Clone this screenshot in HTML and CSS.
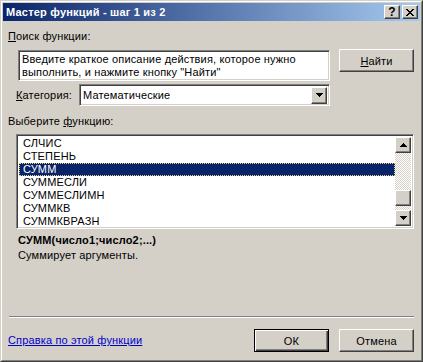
FILE: index.html
```html
<!doctype html>
<html lang="ru">
  <head>
    <meta charset="UTF-8" />
    <title>Мастер функций - шаг 1 из 2</title>
    <link rel="stylesheet" href="styles.css">
  </head>
  <body>
    <div class="window">
      <div class="frame">
        <!-- заголовок окна -->
        <div class="titlebar">
          <span class="title">Мастер функций - шаг 1 из 2</span>
          <div class="title-btns">
            <button class="tbtn help">?</button>
            <button class="tbtn close">
              <svg width="8" height="7" viewBox="0 0 8 7" shape-rendering="crispEdges">
                <path d="M0 0h2v1H0z M6 0h2v1H6z M1 1h2v1H1z M5 1h2v1H5z M2 2h4v1H2z M3 3h2v1H3z M2 4h4v1H2z M1 5h2v1H1z M5 5h2v1H5z M0 6h2v1H0z M6 6h2v1H6z" fill="#000"/>
              </svg>
            </button>
          </div>
        </div>

        <div class="content">
          <div class="label"><u>П</u>оиск функции:</div>

          <div class="search-row">
            <div class="sunken search-box">Введите краткое описание действия, которое нужно выполнить, и нажмите кнопку "Найти"</div>
            <button class="btn find-btn"><u>Н</u>айти</button>
          </div>

          <div class="category-row">
            <span class="category-label"><u>К</u>атегория:</span>
            <div class="sunken combo">
              <span class="combo-value">Математические</span>
              <span class="raised drop-btn">
                <svg width="7" height="4" viewBox="0 0 7 4" shape-rendering="crispEdges">
                  <path d="M0 0h7v1h-1v1h-1v1h-1v1h-1v-1h-1v-1h-1v-1h-1z" fill="#000"/>
                </svg>
              </span>
            </div>
          </div>

          <div class="label list-label">Выберите <u>ф</u>ункцию:</div>

          <div class="sunken listbox">
            <ul class="items">
              <li>СЛЧИС</li>
              <li>СТЕПЕНЬ</li>
              <li class="selected">СУММ</li>
              <li>СУММЕСЛИ</li>
              <li>СУММЕСЛИМН</li>
              <li>СУММКВ</li>
              <li>СУММКВРАЗН</li>
            </ul>
            <div class="scrollbar">
              <span class="raised sb-btn">
                <svg width="7" height="4" viewBox="0 0 7 4" shape-rendering="crispEdges">
                  <path d="M3 0h1v1h1v1h1v1h1v1H0v-1h1v-1h1v-1h1z" fill="#000"/>
                </svg>
              </span>
              <div class="sb-track">
                <span class="raised sb-thumb" style="margin-top: 37px"></span>
              </div>
              <span class="raised sb-btn">
                <svg width="7" height="4" viewBox="0 0 7 4" shape-rendering="crispEdges">
                  <path d="M0 0h7v1h-1v1h-1v1h-1v1h-1v-1h-1v-1h-1v-1h-1z" fill="#000"/>
                </svg>
              </span>
            </div>
          </div>

          <div class="signature">СУММ(число1;число2;...)</div>
          <div class="desc">Суммирует аргументы.</div>

          <div class="separator"></div>

          <div class="footer">
            <a class="help-link" href="#">Справка по этой функции</a>
            <div class="footer-btns">
              <button class="btn default">ОК</button>
              <button class="btn">Отмена</button>
            </div>
          </div>
        </div>
      </div>
    </div>
  </body>
</html>
```

FILE: styles.css
```css
* {
  margin: 0;
  padding: 0;
  box-sizing: border-box;
}

body {
  font-family: 'Liberation Sans', Arial, sans-serif;
  font-size: 11px;
  line-height: 13px;
  letter-spacing: 0.15px;
  color: #000;
  background: #d4d0c8;
}

u {
  text-decoration: underline;
  text-underline-offset: 1px;
}

/* рамка окна */
.window {
  width: 423px;
  height: 362px;
  background: #d4d0c8;
  border: 1px solid;
  border-color: #d4d0c8 #404040 #404040 #d4d0c8;
}

.frame {
  height: 100%;
  border: 1px solid;
  border-color: #fff #808080 #808080 #fff;
  padding: 1px;
  display: flex;
  flex-direction: column;
}

.titlebar {
  height: 18px;
  flex-shrink: 0;
  background: linear-gradient(to right, #0a246a, #a6caf0);
  display: flex;
  align-items: center;
  padding: 0 2px 0 3px;
}

.title {
  flex: 1;
  color: #fff;
  font-weight: bold;
  letter-spacing: 0.2px;
}

.title-btns {
  display: flex;
  gap: 2px;
}

/* объёмные элементы в стиле Windows */
.raised,
.tbtn,
.btn {
  background: #d4d0c8;
  border: 1px solid;
  border-color: #fff #404040 #404040 #fff;
  box-shadow: inset -1px -1px #808080, inset 1px 1px #d4d0c8;
}

.sunken {
  background: #fff;
  border: 1px solid;
  border-color: #808080 #fff #fff #808080;
  box-shadow: inset 1px 1px #404040, inset -1px -1px #d4d0c8;
}

.tbtn {
  width: 16px;
  height: 14px;
  display: flex;
  align-items: center;
  justify-content: center;
  font-family: 'Liberation Sans', Arial, sans-serif;
  font-size: 12px;
  font-weight: bold;
  line-height: 12px;
  color: #000;
}

.btn {
  font-family: 'Liberation Sans', Arial, sans-serif;
  font-size: 11px;
  letter-spacing: 0.15px;
  color: #000;
  width: 75px;
  height: 23px;
  display: flex;
  align-items: center;
  justify-content: center;
  cursor: pointer;
}

.btn.default {
  border-color: #000;
  box-shadow:
    inset 1px 1px #fff,
    inset -1px -1px #404040,
    inset -2px -2px #808080;
}

/* содержимое */
.content {
  flex: 1;
  display: flex;
  flex-direction: column;
  padding: 9px 6px 7px 5px;
}

.search-row {
  display: flex;
  align-items: flex-start;
  gap: 9px;
  margin-top: 6px;
  padding-left: 10px;
}

.search-box {
  width: 312px;
  height: 31px;
  margin-top: 1px;
  padding: 2px 3px;
}

.category-row {
  display: flex;
  align-items: center;
  margin-top: 3px;
  padding-left: 8px;
}

.category-label {
  width: 63px;
}

.combo {
  width: 251px;
  height: 22px;
  display: flex;
  align-items: center;
  padding: 2px 2px 2px 3px;
}

.combo-value {
  flex: 1;
}

.drop-btn {
  width: 16px;
  height: 17px;
  display: flex;
  align-items: center;
  justify-content: center;
}

.list-label {
  margin-top: 9px;
}

.listbox {
  margin-top: 6px;
  margin-left: 8px;
  height: 95px;
  padding: 2px;
  display: flex;
}

.items {
  flex: 1;
  list-style: none;
}

.items li {
  height: 13px;
  padding-left: 4px;
}

.items li.selected {
  background: #0a246a;
  color: #fff;
  outline: 1px dotted #e8cf84;
  outline-offset: -1px;
}

.scrollbar {
  width: 16px;
  display: flex;
  flex-direction: column;
}

.sb-btn {
  height: 16px;
  display: flex;
  align-items: center;
  justify-content: center;
}

.sb-track {
  flex: 1;
  display: flex;
  flex-direction: column;
  background: repeating-conic-gradient(#fff 0 25%, #d4d0c8 0 50%) 0 0 / 2px 2px;
}

.sb-thumb {
  height: 16px;
}

.signature {
  margin-top: 5px;
  margin-left: 10px;
  font-weight: bold;
}

.desc {
  margin-top: 2px;
  margin-left: 10px;
}

.separator {
  margin-top: auto;
  margin-left: 1px;
  height: 2px;
  border-top: 1px solid #808080;
  border-bottom: 1px solid #fff;
}

.footer {
  display: flex;
  align-items: center;
  margin-top: 11px;
}

.help-link {
  flex: 1;
  color: #0000cc;
  text-decoration: underline;
}

.footer-btns {
  display: flex;
  gap: 10px;
}
```
